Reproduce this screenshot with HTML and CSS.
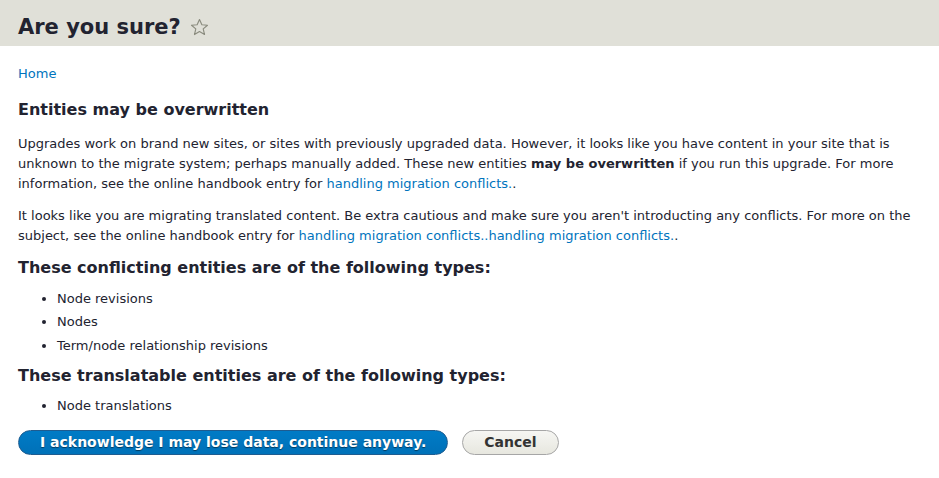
FILE: index.html
```html
<!DOCTYPE html>
<html lang="en">
<head>
<meta charset="utf-8">
<title>Are you sure?</title>
<link rel="stylesheet" href="styles.css">
</head>
<body>
<header class="page-header">
  <h1 class="page-title">Are you sure?
    <svg class="star" width="19" height="19" viewBox="0 0 20 20" aria-hidden="true"><path d="M10 1.6 L12.5 7.1 L18.4 7.6 L13.9 11.5 L15.3 17.4 L10 14.3 L4.7 17.4 L6.1 11.5 L1.6 7.6 L7.5 7.1 Z" fill="none" stroke="#8a8b7e" stroke-width="1.2" stroke-linejoin="round"/></svg>
  </h1>
</header>
<main class="content">
  <nav class="breadcrumb"><a href="#">Home</a></nav>
  <h2 class="heading">Entities may be overwritten</h2>
  <p class="para">Upgrades work on brand new sites, or sites with previously upgraded data. However, it looks like you have content in your site that is unknown to the migrate system; perhaps manually added. These new entities <strong>may be overwritten</strong> if you run this upgrade. For more information, see the online handbook entry for <a href="#">handling migration conflicts.</a>.</p>
  <p class="para">It looks like you are migrating translated content. Be extra cautious and make sure you aren't introducting any conflicts. For more on the subject, see the online handbook entry for <a href="#">handling migration conflicts..handling migration conflicts.</a>.</p>
  <h2 class="heading heading-list">These conflicting entities are of the following types:</h2>
  <ul class="list">
    <li>Node revisions</li>
    <li>Nodes</li>
    <li>Term/node relationship revisions</li>
  </ul>
  <h2 class="heading heading-list">These translatable entities are of the following types:</h2>
  <ul class="list">
    <li>Node translations</li>
  </ul>
  <div class="actions">
    <button class="button button-primary" type="button">I acknowledge I may lose data, continue anyway.</button>
    <button class="button" type="button">Cancel</button>
  </div>
</main>
</body>
</html>
```
FILE: styles.css
```css
html, body {
  margin: 0;
  padding: 0;
}
body {
  font-family: "DejaVu Sans", "Liberation Sans", sans-serif;
  font-size: 13px;
  line-height: 20px;
  color: #222330;
  background: #fff;
}
a {
  color: #0074bd;
  text-decoration: none;
}
.page-header {
  background: #e0e0d8;
  height: 46px;
  padding: 0 18px;
  box-sizing: border-box;
}
.page-title {
  margin: 0;
  padding-top: 11px;
  font-size: 21px;
  line-height: 32px;
  font-weight: bold;
  color: #222330;
  display: flex;
  align-items: center;
  gap: 9px;
}
.star {
  display: block;
}
.content {
  padding: 18px 18px 20px;
}
.breadcrumb {
  line-height: 20px;
  margin-bottom: 16px;
}
.heading {
  font-size: 16px;
  line-height: 20px;
  font-weight: bold;
  margin: 0 0 14px;
}
.para {
  margin: 0 0 12px;
  line-height: 20px;
}
.heading-list {
  margin: 10px 0 10.5px;
}
.list {
  margin: 0 0 8.5px;
  padding-left: 39px;
}
.list li {
  line-height: 20px;
  margin-bottom: 3.5px;
}
.actions {
  display: flex;
  gap: 14px;
  margin-top: 14px;
}
.button {
  font-family: "DejaVu Sans", "Liberation Sans", sans-serif;
  font-size: 14px;
  font-weight: bold;
  line-height: 17px;
  height: 25px;
  padding: 3px 21px;
  border-radius: 20px;
  border: 1px solid #a6a6a6;
  background: linear-gradient(#f6f6f3, #e7e7df);
  color: #333;
  cursor: pointer;
}
.button-primary {
  background: linear-gradient(#007bc6, #0071b8);
  border-color: #1e5c90;
  color: #fff;
  text-shadow: 0 1px 1px rgba(0,0,0,0.5);
  padding: 3px 21px;
}
```
